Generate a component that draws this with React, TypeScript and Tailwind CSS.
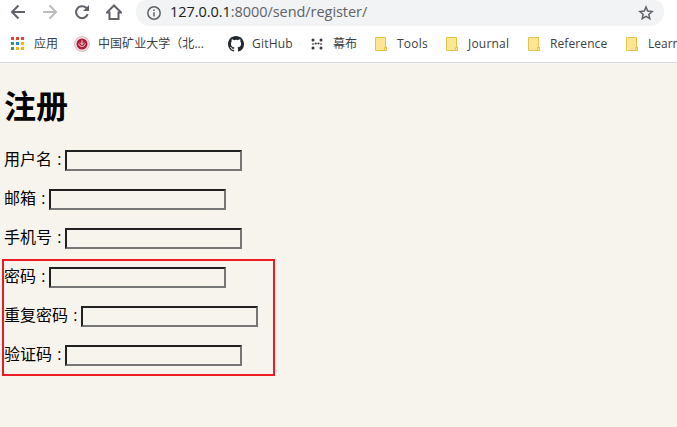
import React from 'react';

const stroke = { fill: 'none', stroke: '#5f6368', strokeWidth: 2 } as const;

function Folder() {
  return (
    <svg width="13" height="15" viewBox="0 0 13 15" className="block">
      <path d="M.5 .5h10v9.500h1v3.500H.5z" fill="#ffe694" stroke="#e8c24a" />
      <path d="M9.500 13.500v-3h2v3z" fill="#ffe694" stroke="#e8c24a" />
    </svg>
  );
}

function Apps() {
  const colors = ['#ea4335', '#ea4335', '#ea4335', '#34a05a', '#1e88e5', '#fbb305', '#34a05a', '#fbb305', '#fbb305'];
  return (
    <svg width="13" height="13" viewBox="0 0 13 13" className="mb-px block">
      {colors.map((c, i) => (
        <rect key={i} x={(i % 3) * 5} y={Math.floor(i / 3) * 5} width="3" height="3" fill={c} />
      ))}
    </svg>
  );
}

function School() {
  return (
    <svg width="16" height="16" viewBox="0 0 16 16" className="block">
      <circle cx="8" cy="8" r="7.400" fill="#f3dfe2" stroke="#e3b3bb" strokeWidth="1" />
      <circle cx="8" cy="8" r="5.500" fill="#ad1f38" />
      <path d="M4.800 7.500c.3 4 6.100 4 6.400 0M8 4.300v4.500M6 6.500l2 2 2-2" fill="none" stroke="#f3d9dd" strokeWidth="1" />
    </svg>
  );
}

function Github() {
  return (
    <svg width="16" height="16" viewBox="0 0 16 16" fill="#24292e" className="block">
      <path d="M8 0C3.580 0 0 3.580 0 8c0 3.540 2.290 6.530 5.470 7.590.4.070.55-.17.55-.38 0-.19-.01-.82-.01-1.490-2.010.37-2.530-.49-2.690-.94-.09-.23-.48-.94-.82-1.130-.28-.15-.68-.52-.01-.53.63-.01 1.080.58 1.230.82.72 1.210 1.870.87 2.330.66.07-.52.28-.87.51-1.070-1.780-.2-3.640-.89-3.640-3.950 0-.87.31-1.590.82-2.150-.08-.2-.36-1.020.08-2.120 0 0 .67-.21 2.200.82A7.600 7.600 0 0 1 8 3.860c.68 0 1.360.09 2 .27 1.530-1.040 2.200-.82 2.200-.82.44 1.100.16 1.920.08 2.120.51.56.82 1.270.82 2.150 0 3.070-1.870 3.750-3.650 3.950.29.25.54.73.54 1.480 0 1.070-.01 1.930-.01 2.200 0 .21.15.46.55.38A8 8 0 0 0 16 8c0-4.420-3.580-8-8-8z" />
    </svg>
  );
}

function Mubu() {
  return (
    <svg width="12" height="12" viewBox="0 0 12 12" className="block" fill="#35383c">
      <circle cx="2" cy="2" r="1.500" />
      <circle cx="2" cy="6" r="1" fill="#6b6e72" />
      <circle cx="2" cy="10" r="1.500" />
      <circle cx="4.700" cy="5.500" r="1.100" />
      <circle cx="7.500" cy="5.500" r="1.100" />
      <circle cx="10" cy="2" r="1.500" />
      <circle cx="10" cy="6" r="1" fill="#6b6e72" />
      <circle cx="10" cy="10" r="1.500" />
    </svg>
  );
}

const bookmarks = [
  { icon: <Apps />, text: '应用', item: 'w-[63px]', iconBox: 'w-[23px]', label: '' },
  { icon: <School />, text: '中国矿业大学（北...', item: 'w-[154px]', iconBox: 'w-[24px]', label: 'tracking-[0.05px]' },
  { icon: <Github />, text: 'GitHub', item: 'w-[83px]', iconBox: 'w-[24px]', label: 'tracking-[0.2px]' },
  { icon: <Mubu />, text: '幕布', item: 'w-[64px]', iconBox: 'w-[22px]', label: '' },
  { icon: <Folder />, text: 'Tools', item: 'w-[71px]', iconBox: 'w-[22px]', label: 'tracking-[0.2px]' },
  { icon: <Folder />, text: 'Journal', item: 'w-[82px]', iconBox: 'w-[22px]', label: 'tracking-[0.2px]' },
  { icon: <Folder />, text: 'Reference', item: 'w-[98px]', iconBox: 'w-[22px]', label: 'tracking-[0.1px]' },
  { icon: <Folder />, text: 'Learn', item: 'w-[90px]', iconBox: 'w-[22px]', label: '' },
];

function Field({ label, width }: { label: string; width: string }) {
  return (
    <label className="flex h-[21px] items-start">
      <span className={`${width} h-5 shrink-0 whitespace-pre text-base leading-[19px]`}>
        {label}<span className="ml-px"> :</span>
      </span>
      <input className="h-[21px] w-[177px] border-2 border-t-[#212121] border-r-[#767676] border-b-[#767676] border-l-[#212121] bg-transparent px-0.5 text-[13px] outline-none" />
    </label>
  );
}

export default function App() {
  return (
    <div className="flex h-[427px] w-[677px] flex-col overflow-hidden bg-[#f7f4ed] font-['Open_Sans','Noto_Sans_CJK_SC',sans-serif] text-black">
      <header className="h-[63px] shrink-0 border-b border-[#dadce0] bg-white">
        <div className="flex h-[26px] items-start">
          <nav className="flex w-[136px] shrink-0 pl-[10px] pt-[4px]">
            <svg width="16" height="16" viewBox="0 0 16 16" className="mr-4 block" {...stroke}><path d="M15 8H2M8.500 1.500L2 8l6.500 6.500" /></svg>
            <svg width="16" height="16" viewBox="0 0 16 16" className="mr-4 block" fill="none" stroke="#babcbe" strokeWidth="2"><path d="M1 8h13M7.500 1.500L14 8l-6.500 6.500" /></svg>
            <svg width="16" height="16" viewBox="0 0 16 16" className="mr-4 block" {...stroke}><path d="M13.700 10.200A6 6 0 1 1 12.200 3.800L14 5.600" /><path d="M15 1v6H9z" fill="#5f6368" stroke="none" /></svg>
            <svg width="16" height="16" viewBox="0 0 16 16" className="block" {...stroke}><path d="M.8 8.500h2.700V15h9V8.500h2.700L8 1.500z" /></svg>
          </nav>
          <div className="flex h-[26px] w-[528px] items-center rounded-b-[14px] rounded-tl-[10px] rounded-tr-[10px] bg-[#f1f3f4] pb-px pl-[11px] pr-[10px]">
            <svg width="14" height="14" viewBox="0 0 14 14" className="mr-[9px] block shrink-0" fill="none" stroke="#5f6368" strokeWidth="1.500"><circle cx="7" cy="7" r="6.200" /><path d="M7 6.200v4.300M7 3.500v1.500" /></svg>
            <span className="flex-1 whitespace-nowrap pb-px text-[14.500px] leading-[22px] tracking-[-0.05px] text-[#5f6368]"><span className="text-[#202124]">127.0.0.1</span>:8000/send/register/</span>
            <svg width="16" height="16" viewBox="0 0 16 16" className="block shrink-0" fill="none" stroke="#5f6368" strokeWidth="1.500"><path d="M8 2l1.700 4.100 4.400.4-3.300 2.900 1 4.300L8 11.400l-3.800 2.300 1-4.300L1.900 6.500l4.400-.4z" /></svg>
          </div>
        </div>
        <div className="flex h-[36px] items-center overflow-hidden pl-[11px] text-xs text-[#3c4043]">
          {bookmarks.map((b) => (
            <div key={b.text} className={`${b.item} flex shrink-0 items-center`}>
              <span className={`${b.iconBox} shrink-0`}>{b.icon}</span>
              <span className={`${b.label} whitespace-nowrap`}>{b.text}</span>
            </div>
          ))}
        </div>
      </header>
      <main className="relative flex flex-1 flex-col pl-1">
        <h1 className="mt-[22px] h-[43px] text-[32px] font-bold leading-[42px]">注册</h1>
        <form className="mt-[22px] flex flex-col gap-[18px]">
          <Field label="用户名" width="w-[61px]" />
          <Field label="邮箱" width="w-[45px]" />
          <Field label="手机号" width="w-[61px]" />
          <Field label="密码" width="w-[45px]" />
          <Field label="重复密码" width="w-[77px]" />
          <Field label="验证码" width="w-[61px]" />
        </form>
        <div className="pointer-events-none absolute left-[2px] top-[196px] h-[117px] w-[273px] border-2 border-[#ed1c24]" />
      </main>
    </div>
  );
}
